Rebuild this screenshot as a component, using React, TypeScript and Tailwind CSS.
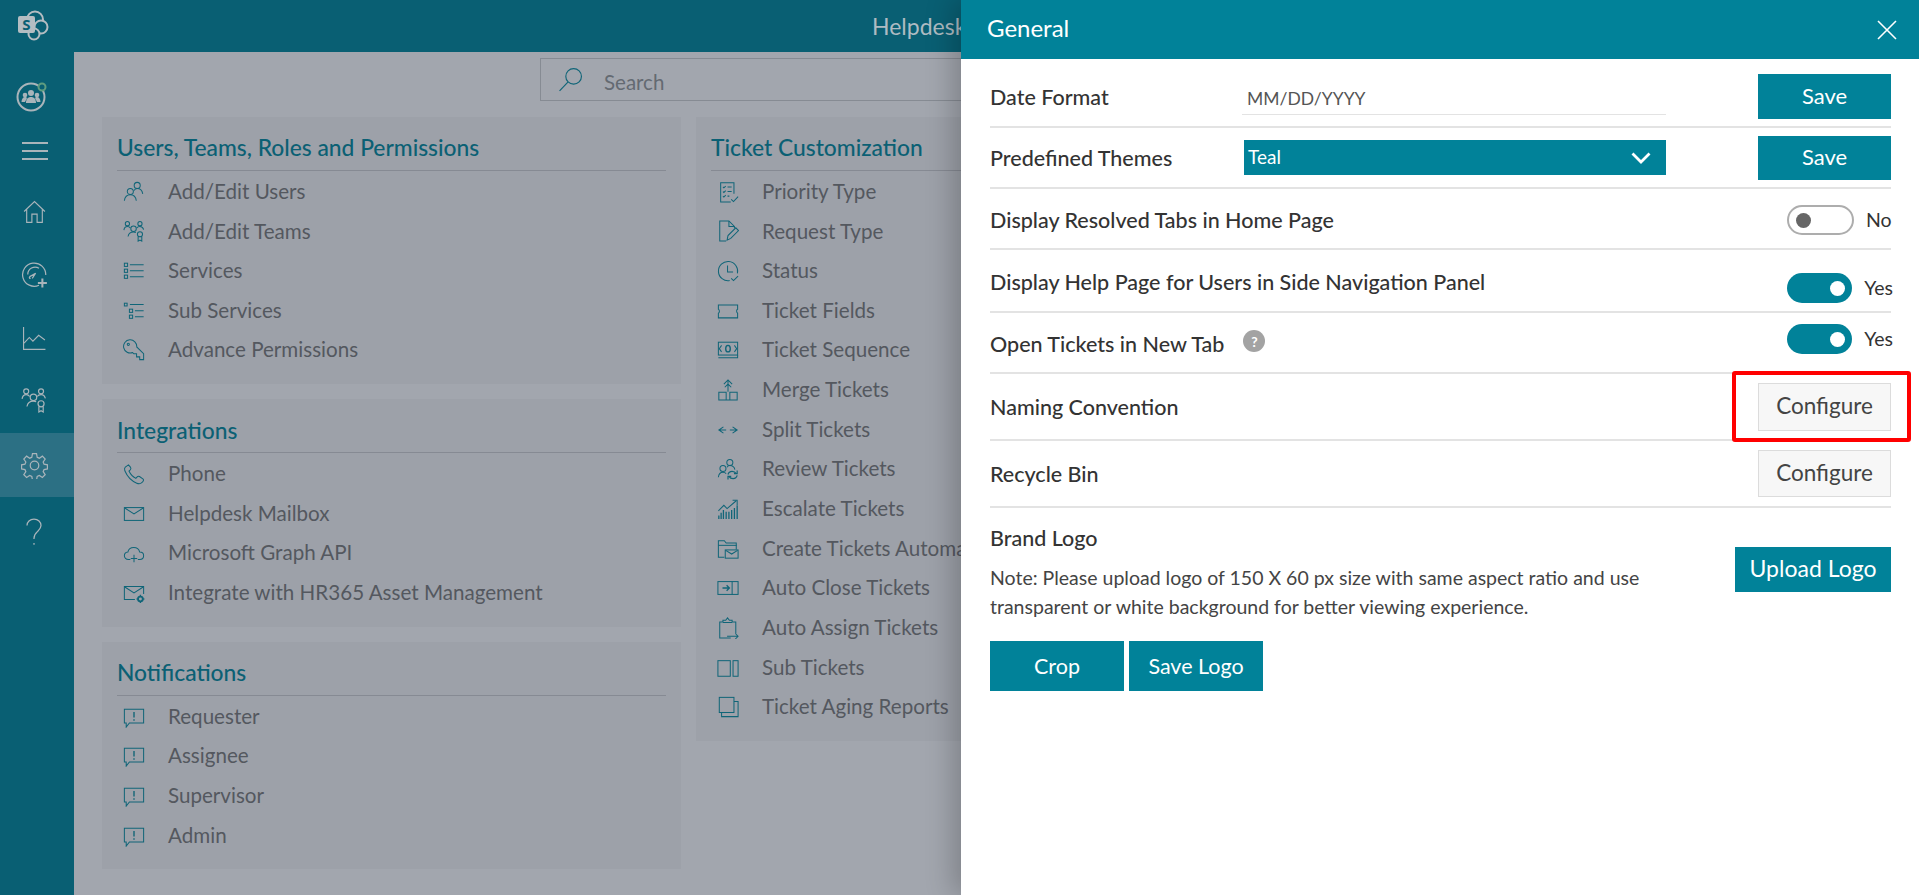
import React from "react";

type P = { name: string; size?: number; className?: string };

const paths: Record<string, React.ReactNode> = {
  users: (<><circle cx="15.5" cy="4.8" r="3.3"/><circle cx="8" cy="11.5" r="3.3"/><path d="M1.5 21.5c.5-4 3-6.5 6.5-6.5s6 2.500 6.500 6.500"/><path d="M12 10.500c.6-1.500 2-2.400 3.500-2.400 3 0 5.500 2.400 6 6"/></>),
  teams: (<><circle cx="4.800" cy="4" r="2.300"/><circle cx="18.500" cy="4" r="2.300"/><circle cx="11.500" cy="9.500" r="3"/><circle cx="18.500" cy="15.500" r="2.800"/><path d="M1 11c.3-2.500 1.800-4 3.800-4 1.400 0 2.500.6 3.200 1.800"/><path d="M15 8.800c.7-1.200 2-1.800 3.500-1.800 2 0 3.500 1.400 4 3.500"/><path d="M5.500 18c.5-3 3-5 6-5 1 0 1.800.2 2.500.6"/><path d="M16.500 18v5l2-1.200 2 1.200v-5"/></>),
  list: (<><rect x="1.500" y="3.500" width="3.500" height="3.500"/><rect x="1.500" y="10" width="3.500" height="3.500"/><rect x="1.500" y="16.500" width="3.500" height="3.500"/><path d="M7.500 5.200h15M7.500 11.800h15M7.500 18.300h15"/></>),
  sublist: (<><rect x="1.500" y="3.500" width="3" height="3"/><rect x="7" y="10" width="3.500" height="3.500"/><rect x="7" y="16.500" width="3.500" height="3.500"/><path d="M7.500 5h15M13 11.800h9.500M13 18.300h9.500"/></>),
  key: (<><path d="M10.500 14.800A7.200 7.200 0 1 1 15 8.700l7.500 7.300v6.500h-4.300v-3h-3.400v-3.300h-3z"/><circle cx="5.800" cy="5.800" r="1.200"/></>),
  phone: (<path d="M6 2 2.500 4.500c-1 1-1 2.500-.5 4 2.500 6 7 11 13 13.500 2 .8 4 .8 5.500-.5 1.500-1.200 2.500-3 1.500-4l-4-2.800c-1-.6-2-.2-2.800.7l-1.200 1.400c-3-1.500-6-4.800-7.500-8l1.400-1.300c.8-.8 1-1.700.4-2.700L6 2z"/>),
  mail: (<><rect x="1.500" y="5" width="21" height="14"/><path d="m2 5.500 10 6.500 10-6.500"/></>),
  cloud: (<><path d="M8 19H6c-2.800 0-4.500-2-4.500-4s1.500-3.800 3.800-4c.7-3 3.300-5 6.400-5 3.200 0 5.800 2 6.500 5 2.500 0 4.300 1.800 4.300 4s-1.800 4-4.300 4h-2"/><path d="M12 14v8M8.500 18h7"/></>),
  mailgear: (<><path d="M13 19H1.500V5h21v8"/><path d="m2 5.500 10 6.500 10-6.500"/><circle cx="19" cy="18.500" r="2.600" strokeWidth="2"/><path d="M19 14v1.500M19 21.500V23M14.800 18.500h1.300M22 18.500h1.300" strokeWidth="1.500"/></>),
  alert: (<><path d="M1.500 3.500h21v15H7L3.500 23v-4.500h-2z"/><path d="M12 6.500v6M12 14.500v1.500" strokeWidth="1.500"/></>),
  checklist: (<><path d="M18.500 14V2H4v21h11"/><path d="m6.500 6.500 1 1 2-2M6.500 11.500l1 1 2-2M6.500 16.500l1 1 2-2M11.500 6.500h4.500M11.500 11.500h4.500M11.500 16.500h2"/><path d="m15.500 20 2.500 2.500 5-5.500"/></>),
  docpen: (<><path d="M10 23H3V1h10l6 6v2"/><path d="M13 1v6h6"/><path d="m11 22 1-5 8.500-8.500 3 3-8.500 8.500-4 2z"/></>),
  clock: (<><path d="M14 22.500a10.500 10.500 0 1 1 8.300-8"/><path d="M11.500 6v7h6"/><path d="m15.500 20 2.500 2.500 5-5"/></>),
  ticket: (<path d="M1.500 5.500h21V10c-1.500.5-1.500 3.500 0 4.500v5h-21v-5c1.500-1 1.500-3.500 0-4.500z"/>),
  cash: (<><rect x="1.500" y="3.500" width="21" height="14"/><path d="M1.500 20.500h21v-3"/><ellipse cx="12" cy="10.500" rx="2.500" ry="3.500" strokeWidth="1.500"/><path d="M5 7 2.500 10.500 5 14M19 7l2.500 3.500L19 14"/></>),
  merge: (<><path d="M12 1v13M7.500 5.500 12 1l4.500 4.500M8.500 9 12 5.500 15.500 9"/><path d="M2 23v-8.500h8V23zM14 23v-8.500h8V23zM2 23h20"/></>),
  split: (<path d="M7 8.500 2 12l5 3.500M2 12h8M17 8.500l5 3.500-5 3.500M14 12h8"/>),
  review: (<><circle cx="14" cy="5" r="3.300"/><circle cx="6.500" cy="11.500" r="3.300"/><path d="M1.500 21c.4-3.500 2.500-5.500 5-5.500 1.500 0 2.700.6 3.500 1.500"/><path d="M11 10c.6-1.200 1.700-1.800 3-1.800 2.800 0 5 2 5.500 4.500"/><path d="M12 18c.5-2 2-3.500 4.500-3.500 2 0 3.500 1 4.500 2.500M22 13.500V17h-3.500M22 19c-.5 2-2.300 3.500-4.500 3.500-2 0-3.500-1-4.500-2.500M12 23.500V20h3.500" strokeWidth="1.300"/></>),
  escalate: (<><path d="m1.500 14 6-6 3.500 3.500 10-8.500"/><path d="M17 2.500h5v5"/><path d="M2 23v-4M4.500 23v-7M7 23v-10M10 23v-8M13 23v-8M16 23v-10M19 23v-12M22 23v-15" strokeWidth="1.400"/></>),
  foldermail: (<><path d="M8 21H1.500V3h6.500l2 2.500h11v7"/><path d="M1.500 8h20"/><rect x="9" y="13" width="14" height="9"/><path d="m9.500 13.500 6.500 4 6.500-4"/></>),
  closebox: (<><rect x="1" y="5" width="22" height="14"/><path d="M16.500 5v14"/><path d="M6 12h7M10.500 9l3 3-3 3" strokeWidth="1.400"/></>),
  assign: (<><path d="M20.500 18V5.500h-4V3.500h-3L11.500 1 9.500 3.500h-3v2H3V23h12"/><path d="M6.500 6h10"/><path d="M11 21h12M20 18l3 3-3 3"/></>),
  sub: (<><rect x="1" y="4" width="13.500" height="17"/><rect x="17.500" y="4" width="5.500" height="17"/></>),
  copy: (<><rect x="2.500" y="1.500" width="16" height="16.500"/><path d="M5 18v4.500h18V6h-4.500"/></>),
  search: (<><circle cx="15" cy="9" r="7.500"/><path d="M9.500 14.500 1.500 23"/></>),
  home: (<><path d="M2 12 12 2.500 22 12M4.500 10v12.500h5V14.500h5v8h5V10"/></>),
  gauge: (<><path d="M16 21.500A10.300 10.300 0 1 1 22 12.500"/><path d="M6 12a6.500 6.500 0 0 1 10-5.500M8.500 15.500c-.8.2-1.500-1-.7-1.600l5.200-3-3 4.500"/><path d="M19 15.500v8M15 19.500h8" strokeWidth="1.800"/></>),
  chart: (<><path d="M1.500 1v21.500h21"/><path d="m2 16.500 5-5.500 3.500 3.500L16 9l6 4.500"/></>),
  gear: (<><circle cx="12" cy="12" r="3.800"/><path d="M10.200 1.500h3.600l.6 3.200 1.900.8 2.700-1.800 2.500 2.500-1.800 2.700.8 1.900 3 .6v3.600l-3 .6-.8 1.900 1.800 2.700-2.500 2.500-2.700-1.800-1.900.8-.6 3.200h-3.600l-.6-3.200-1.900-.8-2.700 1.800-2.500-2.500 1.800-2.700-.8-1.900-3-.6v-3.600l3-.6.8-1.900-1.800-2.700 2.500-2.500 2.700 1.800 1.900-.8z"/></>),
  help: (<><path d="M6 6.500C6 3.500 8.500 1 12 1s6 2.500 6 5.500c0 2-1 3.200-2.700 4.800-1.800 1.700-3.300 3-3.300 6V18"/><path d="M12 21.500v1.500"/></>),
};

function I({ name, size = 22, className = "" }: P) {
  return (
    <svg width={size} height={size} viewBox="0 0 24 24" fill="none" stroke="currentColor" strokeWidth={1.1} className={`shrink-0 ${className}`}>
      {paths[name]}
    </svg>
  );
}

function SpLogo() {
  return (
    <svg width="32" height="32" viewBox="0 0 32 32" className="shrink-0">
      <circle cx="18" cy="9.500" r="8" fill="#095f73" stroke="#b4bdc2" strokeWidth="2" />
      <circle cx="24" cy="17" r="6.500" fill="#095f73" stroke="#b4bdc2" strokeWidth="2" />
      <circle cx="17" cy="24" r="5.500" fill="#095f73" stroke="#b4bdc2" strokeWidth="2" />
      <rect x="1" y="6" width="17" height="17" rx="2" fill="#b4bdc2" />
      <text x="9.500" y="20" textAnchor="middle" fontSize="15" fontWeight="700" fill="#095f73" fontFamily="Open Sans, sans-serif">S</text>
    </svg>
  );
}

function TeamBadge() {
  return (
    <svg width="32" height="32" viewBox="0 0 32 32" className="shrink-0">
      <circle cx="15" cy="17" r="13.500" fill="none" stroke="#a9b4ba" strokeWidth="2" />
      <circle cx="15" cy="13" r="3" fill="#a9b4ba" />
      <circle cx="9" cy="15" r="2.300" fill="#a9b4ba" />
      <circle cx="21" cy="15" r="2.300" fill="#a9b4ba" />
      <path d="M10 23c0-4 2-6 5-6s5 2 5 6zM5.500 22c0-3 1.500-5 3.500-5 1 0 1.500.3 2 1l-2 4zM24.500 22c0-3-1.500-5-3.500-5-1 0-1.500.3-2 1l2 4z" fill="#a9b4ba" />
      <circle cx="26" cy="7" r="3.500" fill="#095f73" stroke="#5f9c80" strokeWidth="2" />
    </svg>
  );
}

const sections = {
  users: {
    title: "Users, Teams, Roles and Permissions",
    items: [["users", "Add/Edit Users"], ["teams", "Add/Edit Teams"], ["list", "Services"], ["sublist", "Sub Services"], ["key", "Advance Permissions"]],
  },
  integrations: {
    title: "Integrations",
    items: [["phone", "Phone"], ["mail", "Helpdesk Mailbox"], ["cloud", "Microsoft Graph API"], ["mailgear", "Integrate with HR365 Asset Management"]],
  },
  notifications: {
    title: "Notifications",
    items: [["alert", "Requester"], ["alert", "Assignee"], ["alert", "Supervisor"], ["alert", "Admin"]],
  },
  tickets: {
    title: "Ticket Customization",
    items: [["checklist", "Priority Type"], ["docpen", "Request Type"], ["clock", "Status"], ["ticket", "Ticket Fields"], ["cash", "Ticket Sequence"], ["merge", "Merge Tickets"], ["split", "Split Tickets"], ["review", "Review Tickets"], ["escalate", "Escalate Tickets"], ["foldermail", "Create Tickets Automatically"], ["closebox", "Auto Close Tickets"], ["assign", "Auto Assign Tickets"], ["sub", "Sub Tickets"], ["copy", "Ticket Aging Reports"]],
  },
};

function Card({ s }: { s: { title: string; items: string[][] } }) {
  return (
    <section className="bg-[#9da1a9] px-[15px] pb-[14px]">
      <h2 className="h-[54px] flex items-center pt-[8px] text-[22.800px] font-medium text-[#0b6074] border-b border-[#868a93] mb-px whitespace-nowrap">{s.title}</h2>
      {s.items.map(([icon, label]) => (
        <div key={label} className="h-[39.65px] flex items-center pl-[6px] text-[#54585f]">
          <I name={icon} className="text-[#106578]" />
          <span className="ml-[23px] text-[20.600px] whitespace-nowrap -mt-px">{label}</span>
        </div>
      ))}
    </section>
  );
}

function Toggle({ on, label, className = "" }: { on: boolean; label: string; className?: string }) {
  return (
    <div className={`ml-auto w-[106px] -mr-[2px] flex items-center ${className}`}>
      {on ? (
        <span className="w-[67px] h-[30px] rounded-full bg-[#018299] flex items-center justify-end pr-[7px]">
          <span className="w-[15px] h-[15px] rounded-full bg-white" />
        </span>
      ) : (
        <span className="w-[67px] h-[30px] rounded-full border-2 border-[#adadad] bg-white flex items-center pl-[7px]">
          <span className="w-[15px] h-[15px] rounded-full bg-[#666666]" />
        </span>
      )}
      <span className="ml-[12px] text-[19.500px] text-[#333333]">{label}</span>
    </div>
  );
}

const label = "text-[21.500px] leading-[24px] font-medium text-[#333333] whitespace-nowrap";
const primary = "bg-[#018299] text-white flex items-center justify-center";
const secondary = "ml-auto w-[133px] bg-[#f7f7f7] border border-[#dcdcdc] text-[22.500px] text-[#444444] flex items-center justify-center pb-[2px]";

export default function App() {
  return (
    <div className="relative flex h-[895px] w-[1919px] overflow-hidden font-['Lato',sans-serif] bg-[#a2a6ae]">
      <aside className="w-[74px] shrink-0 bg-[#095f73] text-[#a9b4ba] flex flex-col items-stretch">
        <div className="h-[52px] flex items-center justify-center -translate-x-[4px]"><SpLogo /></div>
        <div className="mt-[14px] h-[60px] flex items-center justify-center -translate-x-[5px]"><TeamBadge /></div>
        <div className="h-[50px] flex items-center justify-center -translate-x-[2px]"><span className="w-[26px] flex flex-col gap-[6px]"><i className="h-[2px] bg-[#a9b4ba]" /><i className="h-[2px] bg-[#a9b4ba]" /><i className="h-[2px] bg-[#a9b4ba]" /></span></div>
        <div className="h-[70px] flex items-center justify-center -translate-x-[3px]"><I name="home" size={25} /></div>
        <div className="h-[56px] flex items-center justify-center -translate-x-[3px]"><I name="gauge" size={27} /></div>
        <div className="h-[72px] flex items-center justify-center -translate-x-[3px]"><I name="chart" size={25} /></div>
        <div className="h-[52px] flex items-center justify-center -translate-x-[3px]"><I name="teams" size={26} /></div>
        <div className="mt-[7px] h-[64px] bg-[#2c7084] flex items-center justify-center"><I name="gear" size={27} className="-translate-x-[3px]" /></div>
        <div className="h-[70px] flex items-center justify-center -translate-x-[3px]"><I name="help" size={28} /></div>
      </aside>
      <div className="flex-1 min-w-0 flex flex-col">
        <header className="h-[52px] shrink-0 bg-[#095f73] pl-[798px] flex items-center text-[23px] text-[#aebbc2]">Helpdesk</header>
        <main className="flex-1 pl-[28px]">
          <div className="ml-[438px] mt-[6px] w-[900px] h-[43px] border border-[#868b93] flex items-center text-[#646a72]">
            <I name="search" size={25} className="ml-[17px] text-[#106578]" />
            <span className="ml-[21px] text-[20.500px] pt-[5px]">Search</span>
          </div>
          <div className="mt-[16px] flex gap-[15px] items-start">
            <div className="w-[579px] flex flex-col gap-[15px]">
              <Card s={sections.users} />
              <Card s={sections.integrations} />
              <Card s={sections.notifications} />
            </div>
            <div className="w-[579px]">
              <Card s={sections.tickets} />
            </div>
          </div>
        </main>
      </div>

      <div className="absolute right-0 top-0 bottom-0 w-[958px] bg-white shadow-[-8px_0_26px_rgba(0,0,0,0.22)]">
        <div className="h-[59px] bg-[#018299] flex items-center pl-[26px] pr-[19px] text-white">
          <span className="text-[24px] -mt-[4px]">General</span>
          <svg width="20" height="20" viewBox="0 0 20 20" className="ml-auto -translate-x-[3px]" stroke="white" strokeWidth="1.600" fill="none"><path d="M1 1l18 18M19 1 1 19" /></svg>
        </div>
        <div className="pl-[29px] pr-[28px]">
          <div className="h-[69px] flex items-start border-b-2 border-[#e3e3e3]">
            <span className={`${label} mt-[26px] w-[252px]`}>Date Format</span>
            <div className="mt-[26px] w-[424px] h-[30px] border-b border-[#e3e3e3] pl-[5px] text-[17.500px] leading-[28px] text-[#555555]">MM/DD/YYYY</div>
            <button className={`${primary} pb-[3px] text-[22px] ml-auto mt-[15px] w-[133px] h-[45px]`}>Save</button>
          </div>
          <div className="h-[61px] flex items-start border-b-2 border-[#e3e3e3]">
            <span className={`${label} mt-[18px] w-[254px]`}>Predefined Themes</span>
            <div className="mt-[12px] w-[422px] h-[35px] bg-[#018299] text-white pl-[4px] pr-[15px] text-[19px] flex items-center justify-between">
              Teal
              <svg width="20" height="12" viewBox="0 0 20 12" fill="none" stroke="white" strokeWidth="2.800"><path d="m1.500 1.500 8.500 8.500 8.500-8.500" /></svg>
            </div>
            <button className={`${primary} pb-[3px] text-[22px] ml-auto mt-[8px] w-[133px] h-[44px]`}>Save</button>
          </div>
          <div className="h-[61px] flex items-start border-b-2 border-[#e3e3e3]">
            <span className={`${label} mt-[19px]`}>Display Resolved Tabs in Home Page</span>
            <Toggle on={false} label="No" className="mt-[16px]" />
          </div>
          <div className="h-[63px] flex items-start border-b-2 border-[#e3e3e3]">
            <span className={`${label} mt-[20px]`}>Display Help Page for Users in Side Navigation Panel</span>
            <Toggle on label="Yes" className="mt-[23px]" />
          </div>
          <div className="h-[61px] flex items-start border-b-2 border-[#e3e3e3]">
            <span className={`${label} mt-[19px]`}>Open Tickets in New Tab</span>
            <span className="ml-[19px] mt-[17px] w-[22px] h-[22px] rounded-full bg-[#a3a3a3] text-white text-[14px] font-bold flex items-center justify-center">?</span>
            <Toggle on label="Yes" className="mt-[11px]" />
          </div>
          <div className="h-[67px] flex items-start border-b-2 border-[#e3e3e3]">
            <span className={`${label} mt-[21px]`}>Naming Convention</span>
            <button className={`${secondary} mt-[9px] h-[48px]`}>Configure</button>
          </div>
          <div className="h-[67px] flex items-start border-b-2 border-[#e3e3e3]">
            <span className={`${label} mt-[21px]`}>Recycle Bin</span>
            <button className={`${secondary} mt-[9px] h-[47px]`}>Configure</button>
          </div>
          <div className="flex items-start">
            <div className="w-[680px]">
              <div className={`${label} mt-[18px]`}>Brand Logo</div>
              <p className="mt-[13px] text-[19.500px] leading-[29px] text-[#444444]">Note: Please upload logo of 150 X 60 px size with same aspect ratio and use transparent or white background for better viewing experience.</p>
            </div>
            <button className={`${primary} pb-[2px] text-[23px] ml-auto mt-[39px] w-[156px] h-[45px]`}>Upload Logo</button>
          </div>
          <div className="mt-[20px] flex gap-[5px]">
            <button className={`${primary} text-[21.500px] w-[134px] h-[50px]`}>Crop</button>
            <button className={`${primary} text-[21.500px] w-[134px] h-[50px]`}>Save Logo</button>
          </div>
        </div>
        <div className="absolute right-[8px] top-[371px] w-[179px] h-[71px] border-4 border-[#ff0000] rounded-[3px]" />
      </div>
    </div>
  );
}
